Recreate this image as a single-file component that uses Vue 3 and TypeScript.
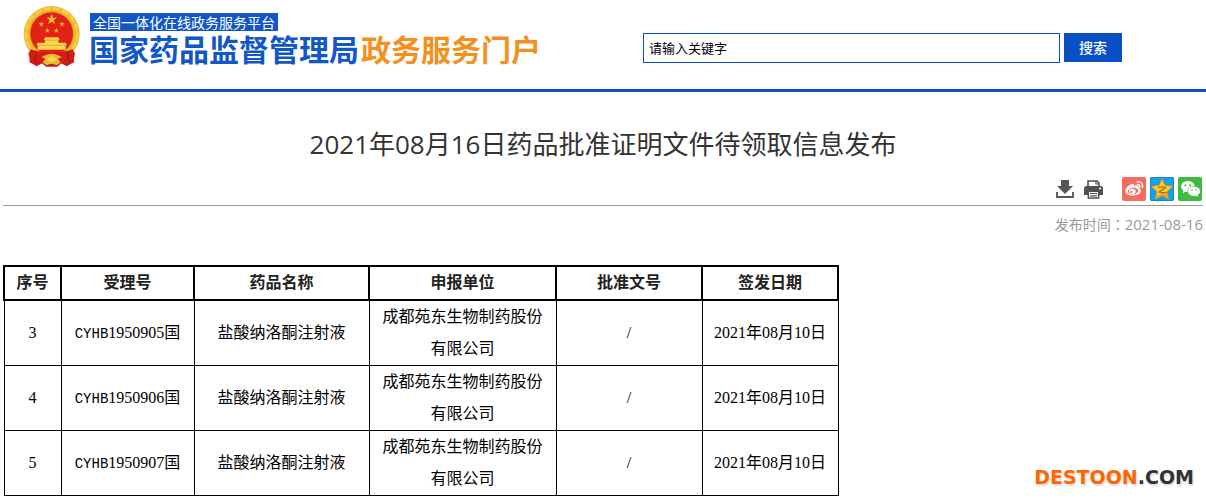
<script setup lang="ts">
import { ref } from 'vue'

interface Approval {
  no: number
  prefix: string
  serial: string
  drug: string
  company: string
  approval: string
  date: string
}

const keyword = ref('')
const headings: string[] = ['序号', '受理号', '药品名称', '申报单位', '批准文号', '签发日期']

const rows: Approval[] = ['1950905', '1950906', '1950907'].map((serial, i) => ({
  no: i + 3,
  prefix: 'CYHB',
  serial,
  drug: '盐酸纳洛酮注射液',
  company: '成都苑东生物制药股份有限公司',
  approval: '/',
  date: '2021年08月10日',
}))
</script>

<template>
  <div class="page">
    <header class="header">
      <a class="brand" href="#">
        <svg class="emblem" viewBox="21 15 174 189" aria-hidden="true">
          <path d="M46 150 40 186 62 199 78 190 90 200 124 200 136 190 152 199 175 186 169 150Z" fill="#c91a17" />
          <circle cx="107" cy="102" r="84" fill="#edb92f" />
          <circle cx="107" cy="102" r="77" fill="none" stroke="#f6cd45" stroke-width="8" stroke-dasharray="22 6" />
          <circle cx="107" cy="101" r="65" fill="#e32119" stroke="#d99f22" stroke-width="2" />
          <path d="m107 42 4 11h12l-10 7 4 12-10-7-10 7 4-12-10-7h12Z" fill="#f7c62f" />
          <g fill="#f2b92e">
            <path d="m76 64 2 6h6l-5 4 2 6-5-4-5 4 2-6-5-4h6Z" />
            <path d="m138 64 2 6h6l-5 4 2 6-5-4-5 4 2-6-5-4h6Z" />
            <path d="m94 83 2 6h6l-5 4 2 6-5-4-5 4 2-6-5-4h6Z" />
            <path d="m121 83 2 6h6l-5 4 2 6-5-4-5 4 2-6-5-4h6Z" />
          </g>
          <path d="M88 112h39l4 8h-4v8h22l4 8h-4v13H65v-13h-4l4-8h22v-8h-4Z" fill="#f9d449" />
          <path d="M85 121h44M65 136h84" stroke="#dda528" stroke-width="2" />
          <path d="M45 148q28 10 62 10t62-10l8 12-6 27-20-7-15 11-13-13-16 8-16-8-13 13-15-11-20 7-6-27Z" fill="#cf1d18" />
          <path d="M76 172q16-11 31-11t31 11l-13 4 9 11-12 9q-15-10-30 0l-12-9 9-11Z" fill="#edb92f" />
          <path d="m91 178 16-10 16 10-16 8Z" fill="#f9d951" />
          <path d="m60 158-3 25m97-25 3 25" stroke="#a91615" stroke-width="4" />
        </svg>
        <span class="names">
          <span class="platform">全国一体化在线政务服务平台</span>
          <span class="agency">国家药品监督管理局<span class="portal">政务服务门户</span></span>
        </span>
      </a>
      <form class="search" role="search" @submit.prevent>
        <input v-model="keyword" class="keyword" type="text" placeholder="请输入关键字" aria-label="请输入关键字" />
        <button class="submit" type="submit">搜索</button>
      </form>
    </header>

    <main class="content">
      <h1 class="title">2021年08月16日药品批准证明文件待领取信息发布</h1>

      <div class="tools">
        <button class="tool" type="button" aria-label="下载">
          <svg viewBox="0 0 18 18"><path d="M5 0h8v6h4L9 14 1 6h4Z" fill="#555" /><path d="M1 12v5h16v-5" fill="none" stroke="#555" stroke-width="1.8" /></svg>
        </button>
        <button class="tool print" type="button" aria-label="打印">
          <svg viewBox="0 0 19 19">
            <path d="M4 6V1h9l2 2v3" fill="#fff" stroke="#505050" stroke-width="1.6" />
            <path d="M12 1v3h3" fill="none" stroke="#505050" stroke-width="1.2" />
            <path d="M2.5 6h14Q19 6 19 8.5V15h-4v-4H4v4H0V8.5Q0 6 2.5 6Z" fill="#505050" />
            <circle cx="16" cy="8.5" r="1" fill="#fff" />
            <path d="M4.3 11.2h10.4V18H4.3Z" fill="#fff" stroke="#505050" stroke-width="1.4" />
            <path d="M6 13.5h7M6 15.8h7" stroke="#505050" stroke-width="1.2" />
          </svg>
        </button>
        <a class="share" href="#" aria-label="分享到微博">
          <svg viewBox="0 0 72 72">
            <rect width="72" height="72" rx="6" fill="#f56b60" />
            <path d="M29 21c5-2 9 0 8 6 9-3 15 0 13 7 6 2 8 5 7 9-3 9-15 13-25 13-12 0-22-5-22-14 0-8 10-18 19-21Z" fill="#fff" />
            <ellipse cx="33" cy="42" rx="16" ry="10" transform="rotate(-8 33 42)" fill="#f56b60" />
            <ellipse cx="31" cy="43" rx="10" ry="8" fill="#fff" />
            <circle cx="28" cy="45" r="3.5" fill="#f56b60" />
            <path d="M45 15c11-4 20 6 16 17M46 23c5-2 9 2 7 8" fill="none" stroke="#fff" stroke-width="4" stroke-linecap="round" />
          </svg>
        </a>
        <a class="share" href="#" aria-label="分享到QQ空间">
          <svg viewBox="0 0 72 72">
            <rect x="1" y="1" width="70" height="70" rx="5" fill="#12a2f0" stroke="#1478c4" stroke-width="3" />
            <path d="m36 5 9 20 23 3-17 16 5 23-20-12-20 12 5-23L4 28l23-3Z" fill="#ffce20" stroke="#e68a12" stroke-width="2" stroke-linejoin="round" />
            <path d="M51 44 30 48q12 4 22 1l4 18-20-12-20 12 2-10q14-4 33-13Z" fill="#f5a11a" />
            <path d="M24 31q12-3 23 0L27 45q12 4 23 1" fill="none" stroke="#b8701a" stroke-width="4" stroke-linejoin="round" />
          </svg>
        </a>
        <a class="share" href="#" aria-label="分享到微信">
          <svg viewBox="0 0 72 72">
            <rect width="72" height="72" rx="6" fill="#3dbb43" />
            <path d="M29 12c13 0 21 8 21 17S42 45 29 45l-7-1-8 5 2-8C3 29 11 12 29 12Z" fill="#fff" />
            <circle cx="22" cy="25" r="3" fill="#3dbb43" /><circle cx="36" cy="25" r="3" fill="#3dbb43" />
            <path d="M48 28c11 0 19 7 19 15 0 5-3 9-7 11l2 7-8-4c-14 3-25-4-25-14 0-8 8-15 19-15Z" fill="#fff" stroke="#3dbb43" stroke-width="2" />
            <circle cx="42" cy="39" r="2.5" fill="#3dbb43" /><circle cx="54" cy="39" r="2.5" fill="#3dbb43" />
          </svg>
        </a>
      </div>

      <p class="published">发布时间：<time datetime="2021-08-16">2021-08-16</time></p>

      <table class="records">
        <colgroup>
          <col class="c-no" /><col class="c-code" /><col class="c-drug" />
          <col class="c-company" /><col class="c-approval" /><col class="c-date" />
        </colgroup>
        <thead>
          <tr><th v-for="h in headings" :key="h" scope="col">{{ h }}</th></tr>
        </thead>
        <tbody>
          <tr v-for="r in rows" :key="r.no">
            <td>{{ r.no }}</td>
            <td><span class="prefix">{{ r.prefix }}</span>{{ r.serial }}国</td>
            <td>{{ r.drug }}</td>
            <td class="company">{{ r.company }}</td>
            <td>{{ r.approval }}</td>
            <td>{{ r.date }}</td>
          </tr>
        </tbody>
      </table>
    </main>

    <div class="mark">DESTOON<span class="domain">.COM</span></div>
  </div>
</template>

<style>
body {
  margin: 0;
  background: #fff;
}
</style>

<style scoped>
.page {
  position: relative;
  min-height: 100vh;
  font-family: "Open Sans", "Noto Sans CJK SC", sans-serif;
  color: #333;
}
.header {
  display: flex;
  align-items: flex-start;
  justify-content: space-between;
  gap: 24px;
  height: 89px;
  padding: 0 84px 0 23px;
  border-bottom: 3px solid #0a50c4;
}
.brand {
  display: flex;
  gap: 8px;
  padding-top: 5px;
  text-decoration: none;
  white-space: nowrap;
}
.emblem {
  width: 58px;
  height: 63px;
}
.names {
  display: flex;
  flex-direction: column;
  align-items: flex-start;
  padding-top: 8px;
  font-family: "Noto Sans CJK SC", sans-serif;
}
.platform {
  margin-left: 1px;
  padding: 0 3px;
  background: #1257c4;
  color: #fff;
  font-size: 14px;
  line-height: 18px;
}
.agency {
  color: #1257c8;
  font-size: 30px;
  font-weight: 700;
  line-height: 34px;
}
.portal {
  padding-left: 2px;
  color: #f3911e;
}
.search {
  display: flex;
  flex: 0 1 479px;
  align-items: flex-start;
  gap: 4px;
  padding-top: 33px;
}
.keyword {
  box-sizing: border-box;
  flex: 1;
  min-width: 0;
  height: 30px;
  padding: 0 5px 2px;
  border: 1px solid #0a50c4;
  border-radius: 0;
  color: #000;
  font: 13px "Noto Sans CJK SC", sans-serif;
}
.keyword::placeholder {
  color: #000;
}
.submit {
  height: 29px;
  padding: 0 15px 2px;
  border: 0;
  background: #0a50c4;
  color: #fff;
  font: 500 14px "Noto Sans CJK SC", sans-serif;
}
.content {
  padding: 32px 3px 0;
}
.title {
  margin: 0;
  font-size: 26px;
  font-weight: 400;
  line-height: 40px;
  text-align: center;
}
.tools {
  display: flex;
  align-items: center;
  justify-content: flex-end;
  gap: 4px;
  padding: 13px 1px 4px 0;
  border-bottom: 1px solid #999;
}
.tool {
  width: 18px;
  height: 18px;
  padding: 0;
  border: 0;
  background: none;
}
.print {
  width: 19px;
  height: 19px;
  margin: 0 15px 0 6px;
}
.share {
  width: 24px;
  height: 24px;
}
.tool svg,
.share svg {
  display: block;
  width: 100%;
  height: 100%;
}
.published {
  margin: 8px 0 31px;
  color: #999;
  font-family: "Noto Sans CJK TC", sans-serif;
  font-size: 14px;
  line-height: 20px;
  text-align: right;
}
.published time {
  font-family: "Open Sans", sans-serif;
  font-size: 15px;
}
.records {
  width: 835px;
  max-width: 100%;
  border-collapse: collapse;
  table-layout: fixed;
  color: #000;
  font-family: "Liberation Serif", "Noto Sans CJK SC", serif;
  font-size: 16px;
  line-height: 32px;
  text-align: center;
}
.records th {
  padding: 0;
  border: 2px solid #000;
  color: #222;
  font-weight: 700;
}
.records td {
  padding: 0 8px;
  border: 1px solid #000;
}
.records .company {
  padding: 0 12px;
}
.c-no { width: 57px; }
.c-code { width: 133px; }
.c-drug { width: 175px; }
.c-company { width: 187px; }
.c-approval { width: 146px; }
.c-date { width: 136px; }
.prefix {
  font-family: "Liberation Mono", monospace;
  font-size: 14px;
}
.mark {
  position: absolute;
  right: 12px;
  bottom: 11px;
  color: #ff6600;
  font: bold 19px/24px "DejaVu Sans", sans-serif;
  text-shadow: 1px 2px 2px #ddd;
}
.domain {
  color: #333;
}
</style>
